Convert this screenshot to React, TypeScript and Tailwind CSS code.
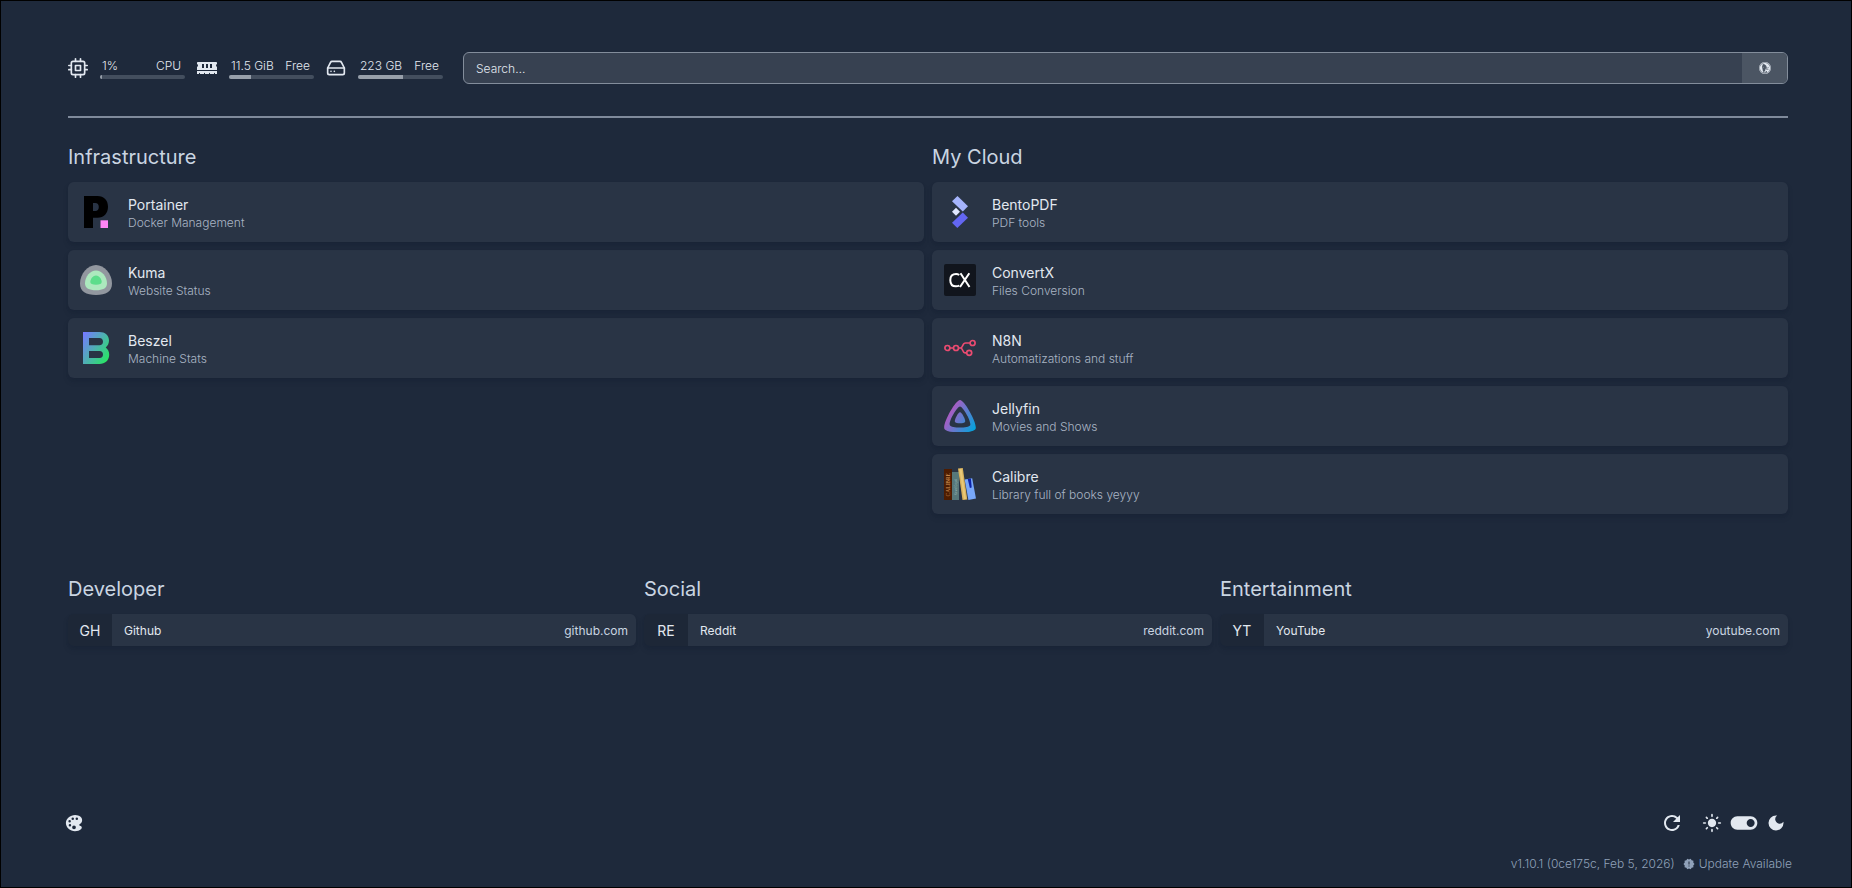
import React from "react";
import { FiCpu, FiHardDrive } from "react-icons/fi";
import { FaMemory } from "react-icons/fa";
import { SiDuckduckgo } from "react-icons/si";
import { IoColorPalette } from "react-icons/io5";
import {
  MdDarkMode,
  MdLightMode,
  MdNewReleases,
  MdRefresh,
  MdToggleOn,
} from "react-icons/md";

const PortainerLogo = () => (
  <svg viewBox="0 0 32 32" className="size-8" aria-hidden="true">
    <path
      fillRule="evenodd"
      d="M4 0h13.500c6.500 0 10.500 4.300 10.500 10.800s-4 11-10.500 11H13V32H4zM13 7v8h2.300c2.200 0 3.500-1.500 3.500-4s-1.300-4-3.500-4z"
      fill="#000"
    />
    <path d="M20.500 24.300H28V32h-7.500z" fill="#ff85f5" />
  </svg>
);

const KumaLogo = () => (
  <svg viewBox="0 0 32 32" className="size-8" aria-hidden="true">
    <path
      d="M16 1C24 1 32 9.500 32 19.500 32 27.500 26 31 16 31S0 27.500 0 19.500C0 9.500 8 1 16 1z"
      fill="#92979f"
    />
    <path
      d="M16 6.500c5.600 0 11 6 11 12.700 0 5-4.200 7-11 7s-11-2-11-7C5 12.500 10.400 6.500 16 6.500z"
      fill="#ace9be"
    />
    <path
      d="M16 11.500c2.800 0 5.700 3.200 5.700 6.600 0 2-2 2.600-5.700 2.600s-5.700-.6-5.700-2.600c0-3.400 2.900-6.600 5.700-6.600z"
      fill="#5cdd8b"
    />
  </svg>
);

const BeszelLogo = () => (
  <svg viewBox="0 0 32 32" className="size-8" aria-hidden="true">
    <defs>
      <linearGradient id="beszel" x1="0" y1="0.1" x2="1" y2="0.9">
        <stop offset="0" stopColor="#747bff" />
        <stop offset="1" stopColor="#24eb5c" />
      </linearGradient>
    </defs>
    <path
      fillRule="evenodd"
      d="M3 0h16.500C25 0 29 3.300 29 8.500c0 3-1.200 5.300-3.300 7 2.200 1.600 3.500 4.200 3.500 7.300C29.200 28.500 25 32 19.500 32H3zM9 6v7.300h10.500c2.200 0 3.500-1.400 3.500-3.600S21.700 6 19.500 6zM9 19v7h10.700c2.100 0 3.300-1.400 3.300-3.500S21.800 19 19.700 19z"
      fill="url(#beszel)"
    />
  </svg>
);

const BentoLogo = () => (
  <svg viewBox="0 0 32 32" className="size-8" aria-hidden="true">
    <path d="M13.500 0L24 10.300l-5.200 5.200L8 5.200z" fill="#a5b4fc" />
    <path d="M12 11.700l4 4-4 4-4-4z" fill="#e0e7ff" />
    <path d="M18.800 16.500L24 21.700 13.300 32 8 26.800z" fill="#6366f1" />
  </svg>
);

const ConvertXLogo = () => (
  <svg viewBox="0 0 32 32" className="size-8" aria-hidden="true">
    <rect width="32" height="32" rx="2" fill="#11151d" />
    <g fill="none" stroke="#fff" strokeWidth="2">
      <path d="M15.300 11c-1-.6-2-.9-3.200-.9-3.700 0-5.800 2.500-5.800 6.100 0 3.700 2 6.100 5.600 6.100 1.300 0 2.300-.2 3.400-.7" />
      <path d="M16.500 9.200l9 13.800M25.300 9.200l-9.300 13.800" />
    </g>
  </svg>
);

const N8nLogo = () => (
  <svg
    viewBox="0 0 32 32"
    className="size-8"
    fill="none"
    stroke="#ea4b71"
    strokeWidth="1.700"
    aria-hidden="true"
  >
    <circle cx="3.400" cy="16" r="2.500" />
    <circle cx="12" cy="16" r="2.500" />
    <circle cx="28.600" cy="11" r="2.500" />
    <circle cx="25.200" cy="20.800" r="2.500" />
    <path d="M5.900 16h3.600M14.500 16h2c2.600 0 1.700-5 5-5h4.600M16.500 16c2.800 0 1.500 4.800 4.500 4.800h1.700" />
  </svg>
);

const JellyfinLogo = () => (
  <svg viewBox="0 0 512 512" className="size-8" aria-hidden="true">
    <defs>
      <linearGradient
        id="jellyfin"
        gradientUnits="userSpaceOnUse"
        x1="97.500"
        y1="188"
        x2="522"
        y2="433"
      >
        <stop offset="0" stopColor="#aa5cc3" />
        <stop offset="1" stopColor="#00a4dc" />
      </linearGradient>
    </defs>
    <path
      d="M175 352c15 29 147 29 162 0S286 196 256 196s-96 127-81 156z"
      fill="url(#jellyfin)"
    />
    <path
      fillRule="evenodd"
      d="M256 0C182 0 -30 386 7 462c37.500 75 461 74 498 0S330 0 256 0zm163 402c-24 48-302 49-326 0S207 104 256 104s187 249 163 298z"
      fill="url(#jellyfin)"
    />
  </svg>
);

const CalibreLogo = () => (
  <svg viewBox="0 0 32 32" className="size-8" aria-hidden="true">
    <rect x="0" y="1" width="8" height="31" fill="#4e1c00" />
    <rect x="8" y="4" width="7" height="28" fill="#56777a" />
    <path d="M14 .6L18.800 0 23.300 31.500l-4.800.5z" fill="#d8b25c" />
    <path d="M15.400 1l2.200-.2L22 31l-2 .3z" fill="#e8c878" />
    <path d="M20.600 11.600l7.600-1.400L32 30.500l-7.600 1.500z" fill="#78a8fa" />
    <path d="M23.700 11l3.200-.6.8 9.200-1.800.4z" fill="#0c22a8" />
    <text
      transform="translate(6.300 28.500) rotate(-90)"
      fontSize="5.500"
      fontFamily="Liberation Serif, serif"
      fill="#d9985a"
    >
      CALIBRE
    </text>
    <text
      transform="translate(12.500 27) rotate(-90)"
      fontSize="3"
      fontFamily="Liberation Sans, sans-serif"
      fill="#93b0ae"
    >
      Kovid Goyal
    </text>
  </svg>
);

const resources = [
  { icon: FiCpu, value: "1%", label: "CPU", percent: 2 },
  { icon: FaMemory, value: "11.5 GiB", label: "Free", percent: 26 },
  { icon: FiHardDrive, value: "223 GB", label: "Free", percent: 53 },
];

const groups = [
  {
    name: "Infrastructure",
    services: [
      { name: "Portainer", description: "Docker Management", logo: PortainerLogo },
      { name: "Kuma", description: "Website Status", logo: KumaLogo },
      { name: "Beszel", description: "Machine Stats", logo: BeszelLogo },
    ],
  },
  {
    name: "My Cloud",
    services: [
      { name: "BentoPDF", description: "PDF tools", logo: BentoLogo },
      { name: "ConvertX", description: "Files Conversion", logo: ConvertXLogo },
      { name: "N8N", description: "Automatizations and stuff", logo: N8nLogo },
      { name: "Jellyfin", description: "Movies and Shows", logo: JellyfinLogo },
      { name: "Calibre", description: "Library full of books yeyyy", logo: CalibreLogo },
    ],
  },
];

const bookmarks = [
  { group: "Developer", abbr: "GH", name: "Github", host: "github.com" },
  { group: "Social", abbr: "RE", name: "Reddit", host: "reddit.com" },
  { group: "Entertainment", abbr: "YT", name: "YouTube", host: "youtube.com" },
];

const App = () => {
  return (
    <div className="flex min-h-screen flex-col border border-black bg-[#1e293b] font-['Inter',sans-serif] text-slate-200">
      <header className="mt-[51px] mr-[63px] ml-[67px] flex flex-wrap items-center gap-5 border-b-2 border-[#7f8a9b] pb-8">
        <div className="flex gap-3">
          {resources.map(({ icon: Icon, value, label, percent }, i) => (
            <div key={i} className="flex items-center gap-3">
              <Icon className="size-5" />
              <div className="w-[85px] pt-px">
                <div className="flex justify-between pr-1 pl-0.5 text-xs font-light">
                  <span>{value}</span>
                  <span>{label}</span>
                </div>
                <div className="mt-px h-1 overflow-hidden rounded-full bg-[#434e5e]">
                  <div className="h-1 bg-[#979faa]" style={{ width: `${percent}%` }} />
                </div>
              </div>
            </div>
          ))}
        </div>
        <form
          className="flex h-8 flex-1 overflow-hidden rounded-md border border-[#838d9b] bg-[#374151]"
          onSubmit={(e) => e.preventDefault()}
        >
          <input
            type="text"
            aria-label="Search"
            placeholder="Search…"
            className="min-w-0 flex-1 bg-transparent px-3 pt-px text-xs font-light outline-none placeholder:text-slate-200"
          />
          <button
            type="submit"
            aria-label="DuckDuckGo"
            className="flex w-[45px] items-center justify-center bg-[#4b5563]"
          >
            <SiDuckduckgo className="size-3" />
          </button>
        </form>
      </header>

      <main className="mr-[63px] ml-[67px]">
        <div className="grid gap-x-2 pt-[25px] md:grid-cols-2">
          {groups.map((group) => (
            <section key={group.name}>
              <h2 className="text-xl leading-7 text-slate-300">{group.name}</h2>
              <ul className="mt-[11px] flex flex-col gap-2">
                {group.services.map(({ name, description, logo: Logo }) => (
                  <li key={name}>
                    <a
                      href="#"
                      className="flex h-[60px] items-center gap-4 rounded-md bg-white/5 px-3 shadow-md shadow-slate-900/20"
                    >
                      <Logo />
                      <div className="pt-1">
                        <div className="text-sm leading-[18px]">{name}</div>
                        <p className="text-xs leading-[18px] font-light text-[#a9b5c4]">
                          {description}
                        </p>
                      </div>
                    </a>
                  </li>
                ))}
              </ul>
            </section>
          ))}
        </div>

        <div className="grid gap-x-2 pt-[61px] md:grid-cols-3">
          {bookmarks.map((bookmark) => (
            <section key={bookmark.group}>
              <h2 className="text-xl leading-7 text-slate-300">{bookmark.group}</h2>
              <a
                href="#"
                className="mt-[11px] flex h-8 overflow-hidden rounded-md text-xs shadow-md shadow-slate-900/20"
              >
                <span className="flex w-11 items-center justify-center bg-[#1d2737] pt-0.5 text-sm">
                  {bookmark.abbr}
                </span>
                <span className="flex flex-1 items-center justify-between bg-white/5 pt-0.5 pr-2 pl-3">
                  <span>{bookmark.name}</span>
                  <span className="text-slate-300">{bookmark.host}</span>
                </span>
              </a>
            </section>
          ))}
        </div>
      </main>

      <footer className="mt-auto pr-[59px] pb-[15px] pl-[63px]">
        <div className="flex items-center justify-between">
          <button type="button" aria-label="Color palette">
            <IoColorPalette className="size-5" />
          </button>
          <div className="flex items-center pr-1.5">
            <button type="button" aria-label="Refresh" className="mr-[18px]">
              <MdRefresh className="size-6" />
            </button>
            <button type="button" aria-label="Toggle theme" className="flex items-center gap-1.5">
              <MdLightMode className="size-5" />
              <MdToggleOn className="size-8" />
              <MdDarkMode className="size-5" />
            </button>
          </div>
        </div>
        <div className="mt-[17px] flex items-center justify-end gap-2 text-xs font-light text-slate-400">
          <span>v1.10.1 (0ce175c, Feb 5, 2026)</span>
          <a href="#" className="flex items-center gap-1">
            <MdNewReleases className="size-3" />
            Update Available
          </a>
        </div>
      </footer>
    </div>
  );
};

export default App;
